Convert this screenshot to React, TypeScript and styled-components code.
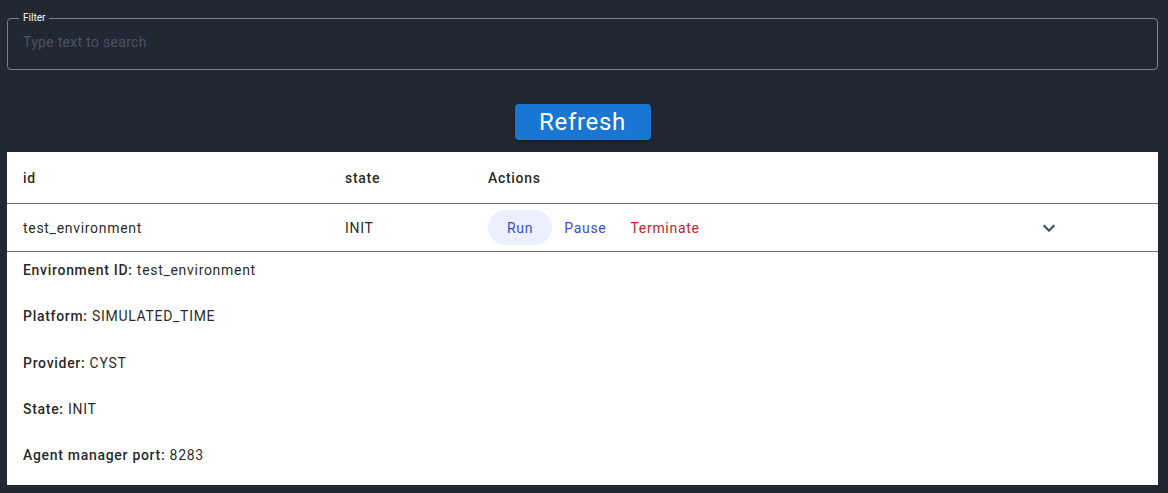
import styled, { createGlobalStyle } from 'styled-components'

const GlobalStyle = createGlobalStyle`
  html, body {
    margin: 0;
    padding: 0;
    background: #212733;
    font-family: Roboto, "Liberation Sans", Arial, sans-serif;
  }
`

const Page = styled.div`
  padding: 12px 10px 8px 7px;
  display: flex;
  flex-direction: column;
`

const FilterBox = styled.fieldset`
  margin: 0;
  padding: 0 15px 9px;
  border: 1px solid #7b808a;
  border-radius: 4px;
  legend {
    font-size: 10px;
    color: #ffffff;
    padding: 0 4px;
    margin-left: -4px;
    line-height: 12px;
  }
  input {
    display: block;
    width: 100%;
    height: 36px;
    box-sizing: border-box;
    background: transparent;
    border: none;
    outline: none;
    font-family: inherit;
    font-size: 14px;
    letter-spacing: 0.3px;
    color: #ffffff;
    padding: 0;
    &::placeholder {
      color: #4b5361;
    }
  }
`

const RefreshRow = styled.div`
  display: flex;
  justify-content: center;
  margin-top: 34px;
`

const RefreshButton = styled.button`
  height: 36px;
  width: 136px;
  border: none;
  border-radius: 4px;
  background: #1976d2;
  color: #fff;
  font-family: inherit;
  font-size: 24px;
  letter-spacing: 0.7px;
  box-shadow: 0 2px 3px rgba(0, 0, 0, 0.3);
  cursor: pointer;
`

const Panel = styled.div`
  margin-top: 12px;
  background: #fff;
  color: rgba(0, 0, 0, 0.87);
  font-size: 14px;
  letter-spacing: 0.7px;
`

const Row = styled.div<{ $head?: boolean }>`
  display: grid;
  grid-template-columns: 322px 143px 1fr 120px;
  align-items: center;
  height: ${(p) => (p.$head ? '51px' : '47px')};
  border-bottom: 1px solid #6f6f6f;
  font-weight: ${(p) => (p.$head ? 500 : 400)};
  > div {
    padding-left: 16px;
  }
`

const Actions = styled.div`
  display: flex;
  align-items: center;
  gap: 12px;
`

const ActionButton = styled.button<{ $tone: 'blue' | 'red'; $filled?: boolean }>`
  height: 35px;
  padding: 0 ${(p) => (p.$filled ? '19px' : '0')};
  border: none;
  border-radius: 18px;
  background: ${(p) => (p.$filled ? '#eceffd' : 'transparent')};
  color: ${(p) => (p.$tone === 'red' ? '#c4202a' : '#3a4cd6')};
  font-family: inherit;
  font-size: 14px;
  letter-spacing: 0.7px;
  margin-right: ${(p) => (p.$filled ? '0' : '12px')};
  cursor: pointer;
`

const ExpandCell = styled.div`
  display: flex;
  align-items: center;
  svg {
    margin-left: -17px;
  }
`

const Details = styled.div`
  display: flex;
  flex-direction: column;
  gap: 26.25px;
  padding: 8px 16px 20px;
  line-height: 20px;
  b {
    font-weight: 500;
  }
`

const details = [
  ['Environment ID', 'test_environment'],
  ['Platform', 'SIMULATED_TIME'],
  ['Provider', 'CYST'],
  ['State', 'INIT'],
  ['Agent manager port', '8283'],
]

export default function App() {
  return (
    <>
      <GlobalStyle />
      <Page>
        <FilterBox>
          <legend>Filter</legend>
          <input placeholder='Type text to search' />
        </FilterBox>
        <RefreshRow>
          <RefreshButton>Refresh</RefreshButton>
        </RefreshRow>
        <Panel>
          <Row $head>
            <div>id</div>
            <div>state</div>
            <div>Actions</div>
            <div />
          </Row>
          <Row>
            <div>test_environment</div>
            <div>INIT</div>
            <Actions>
              <ActionButton $tone='blue' $filled>
                Run
              </ActionButton>
              <ActionButton $tone='blue'>Pause</ActionButton>
              <ActionButton $tone='red'>Terminate</ActionButton>
            </Actions>
            <ExpandCell>
              <svg width='24' height='24' viewBox='0 0 24 24' fill='#34495e'>
                <path d='M16.59 8.59 12 13.17 7.41 8.59 6 10l6 6 6-6z' />
              </svg>
            </ExpandCell>
          </Row>
          <Details>
            {details.map(([k, v]) => (
              <div key={k}>
                <b>{k}:</b> {v}
              </div>
            ))}
          </Details>
        </Panel>
      </Page>
    </>
  )
}
